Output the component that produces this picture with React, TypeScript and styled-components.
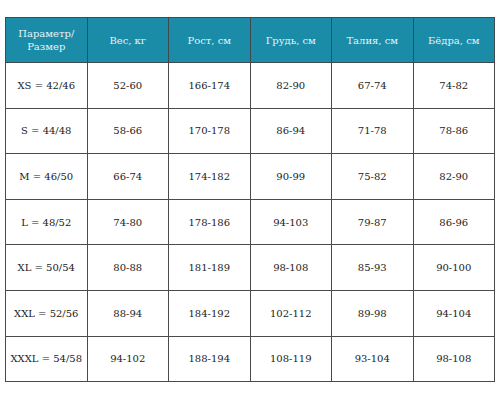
import styled, { createGlobalStyle } from "styled-components";

const GlobalStyle = createGlobalStyle`
  body {
    margin: 0;
    background: #ffffff;
    font-family: "DejaVu Serif", serif;
  }
`;

const Page = styled.div`
  padding: 17px 5px 0 5px;
`;

const Table = styled.table`
  width: 490px;
  border-collapse: collapse;
  table-layout: fixed;
  font-family: "DejaVu Serif", serif;
  font-size: 10px;
`;

const HeadRow = styled.tr`
  height: 45px;
  background-color: #1a8ca8;
`;

const Row = styled.tr`
  height: 45.6px;
`;

const HeadCell = styled.th`
  border: 1px solid #3e4a4e;
  color: #e6f3f6;
  font-weight: 400;
  text-align: center;
  vertical-align: middle;
  line-height: 13px;
  padding: 0 4px;
`;

const Cell = styled.td`
  border: 1px solid #4a4a4a;
  color: #222222;
  text-align: center;
  vertical-align: middle;
  padding: 0;
  white-space: nowrap;
`;

const headers = [
  <>Параметр/<br />Размер</>,
  "Вес, кг",
  "Рост, см",
  "Грудь, см",
  "Талия, см",
  "Бёдра, см",
];

const rows = [
  ["XS = 42/46", "52-60", "166-174", "82-90", "67-74", "74-82"],
  ["S = 44/48", "58-66", "170-178", "86-94", "71-78", "78-86"],
  ["M = 46/50", "66-74", "174-182", "90-99", "75-82", "82-90"],
  ["L = 48/52", "74-80", "178-186", "94-103", "79-87", "86-96"],
  ["XL = 50/54", "80-88", "181-189", "98-108", "85-93", "90-100"],
  ["XXL = 52/56", "88-94", "184-192", "102-112", "89-98", "94-104"],
  ["XXXL = 54/58", "94-102", "188-194", "108-119", "93-104", "98-108"],
];

export default function App() {
  return (
    <>
      <GlobalStyle />
      <Page>
        <Table>
          <thead>
            <HeadRow>
              {headers.map((h, i) => (
                <HeadCell key={i}>{h}</HeadCell>
              ))}
            </HeadRow>
          </thead>
          <tbody>
            {rows.map((r) => (
              <Row key={r[0]}>
                {r.map((c, i) => (
                  <Cell key={i}>{c}</Cell>
                ))}
              </Row>
            ))}
          </tbody>
        </Table>
      </Page>
    </>
  );
}
